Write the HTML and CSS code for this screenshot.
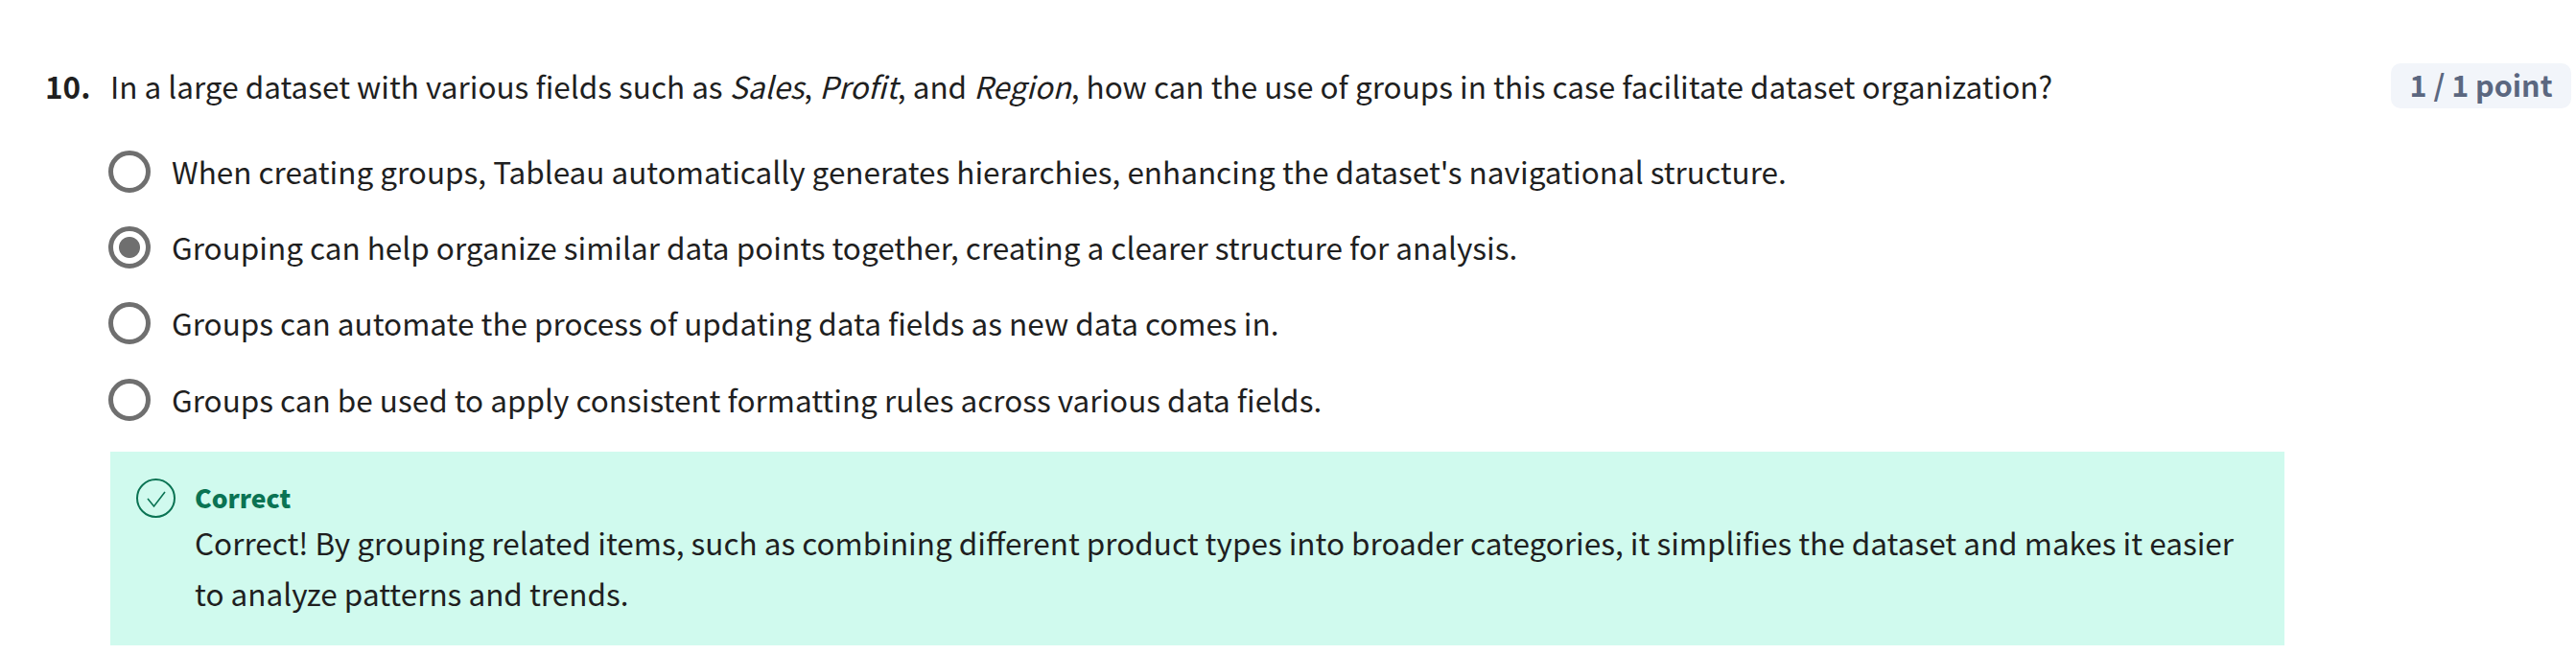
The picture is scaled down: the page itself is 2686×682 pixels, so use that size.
FILE: index.html
```html
<!DOCTYPE html>
<html lang="en">
<head>
    <meta charset="UTF-8">
    <title>Quiz question 10</title>
    <link rel="stylesheet" href="styles.css">
</head>
<body>
    <div class="question">
        <div class="question-head">
            <span class="number">10.</span>
            <p class="prompt">In a large dataset with various fields such as <em>Sales</em>, <em>Profit</em>, and <em>Region</em>, how can the use of groups in this case facilitate dataset organization?</p>
            <span class="points">1 / 1 point</span>
        </div>

        <div class="body">
            <ul class="options">
                <li class="option"><span class="radio"></span>When creating groups, Tableau automatically generates hierarchies, enhancing the dataset's navigational structure.</li>
                <li class="option"><span class="radio checked"></span>Grouping can help organize similar data points together, creating a clearer structure for analysis.</li>
                <li class="option"><span class="radio"></span>Groups can automate the process of updating data fields as new data comes in.</li>
                <li class="option"><span class="radio"></span>Groups can be used to apply consistent formatting rules across various data fields.</li>
            </ul>

            <div class="feedback">
                <svg class="check" viewBox="0 0 41 41" width="41" height="41" aria-hidden="true">
                    <circle cx="20.5" cy="20.5" r="19.5" fill="none" stroke="#0a7353" stroke-width="2"/>
                    <path d="M12 21 L18.5 29 L30 14" fill="none" stroke="#0a7353" stroke-width="1.6"/>
                </svg>
                <div class="feedback-text">
                    <div class="feedback-title">Correct</div>
                    <p class="feedback-msg">Correct! By grouping related items, such as combining different product types into broader categories, it simplifies the dataset and makes it easier to analyze patterns and trends.</p>
                </div>
            </div>
        </div>
    </div>
</body>
</html>
```

FILE: styles.css
```css
body {
    margin: 0;
    background-color: #fff;
    color: #1f1f1f;
    font-family: "Noto Sans CJK SC", "Noto Sans", sans-serif;
    font-size: 31.5px;
}

.question {
    padding: 66px 5px 0 47px;
}

.question-head {
    display: flex;
    align-items: flex-start;
}

.number {
    width: 68px;
    flex-shrink: 0;
    font-weight: 700;
    line-height: 46px;
}

.prompt {
    flex: 1;
    margin: 0;
    line-height: 46px;
}

.points {
    width: 188px;
    height: 47px;
    line-height: 45px;
    border-radius: 10px;
    background-color: #f2f5fa;
    color: #5b6780;
    font-size: 30.5px;
    font-weight: 600;
    text-align: center;
    white-space: nowrap;
}

.body {
    margin-left: 68px;
    width: 2267px;
}

.options {
    list-style: none;
    margin: 25px 0 0;
    padding: 0;
}

.option {
    display: flex;
    align-items: center;
    height: 79.3px;
}

.radio {
    width: 44px;
    height: 44px;
    margin: 2px 22px 0 -2px;
    box-sizing: border-box;
    border: 5px solid #6f6f6f;
    border-radius: 50%;
    flex-shrink: 0;
}

.radio.checked {
    background: radial-gradient(circle, #6f6f6f 10.5px, transparent 11.5px);
}

.feedback {
    display: flex;
    align-items: flex-start;
    margin-top: 15.5px;
    height: 202px;
    box-sizing: border-box;
    padding: 28px 22px 0 27px;
    background-color: #d0faee;
}

.check {
    flex-shrink: 0;
    margin-right: 20px;
}

.feedback-title {
    color: #0a7353;
    font-size: 26.5px;
    font-weight: 900;
    line-height: 40px;
}

.feedback-msg {
    margin: 0;
    line-height: 53px;
}
```
